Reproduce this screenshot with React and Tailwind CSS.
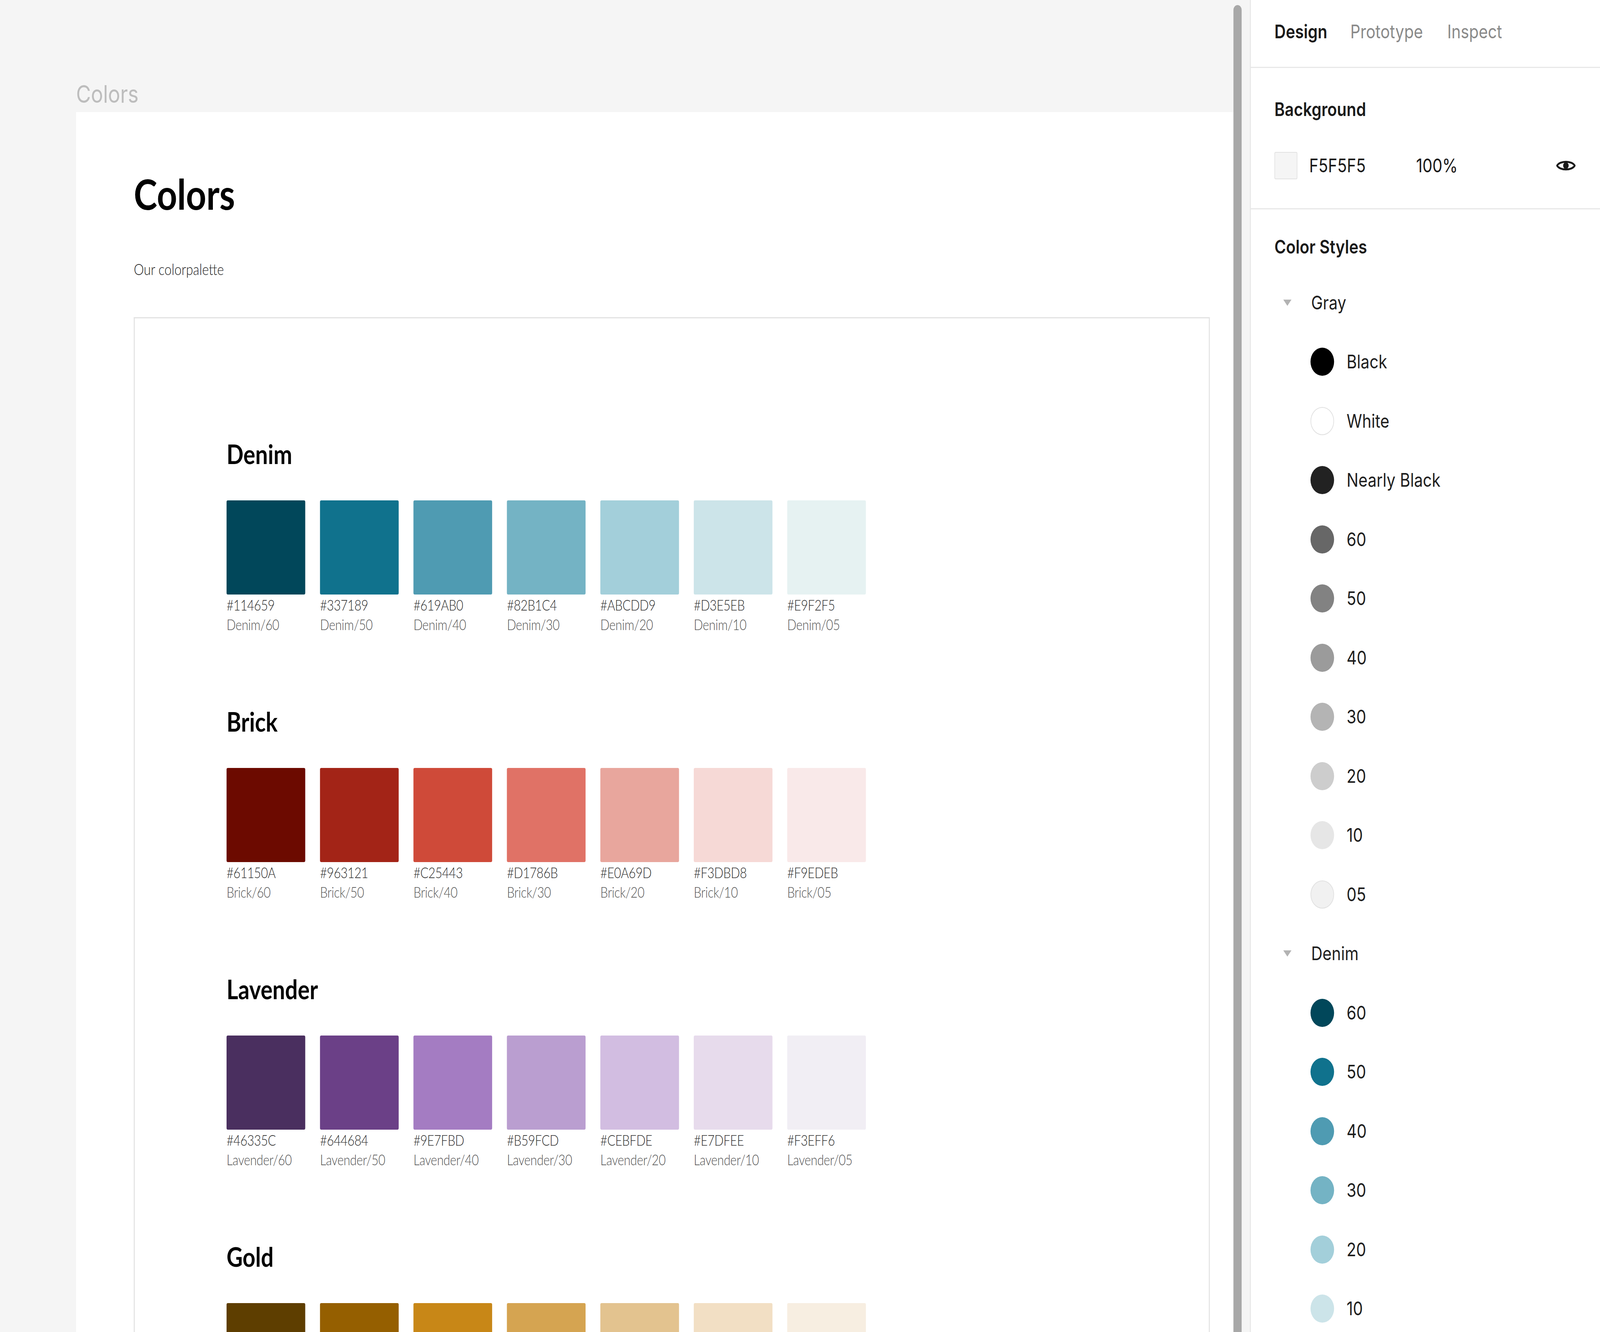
import { useEffect, useState } from "react";

const palettes = [
  {
    name: "Denim",
    swatches: [
      ["#114659", "60", "#01475a"],
      ["#337189", "50", "#10728d"],
      ["#619AB0", "40", "#4f9bb2"],
      ["#82B1C4", "30", "#74b3c4"],
      ["#ABCDD9", "20", "#a3cfda"],
      ["#D3E5EB", "10", "#cce4e9"],
      ["#E9F2F5", "05", "#e6f2f2"],
    ],
  },
  {
    name: "Brick",
    swatches: [
      ["#61150A", "60", "#6c0a00"],
      ["#963121", "50", "#a32417"],
      ["#C25443", "40", "#cf4a39"],
      ["#D1786B", "30", "#e07266"],
      ["#E0A69D", "20", "#e8a69d"],
      ["#F3DBD8", "10", "#f6d9d6"],
      ["#F9EDEB", "05", "#f9e9e9"],
    ],
  },
  {
    name: "Lavender",
    swatches: [
      ["#46335C", "60", "#4a2f5f"],
      ["#644684", "50", "#6b4087"],
      ["#9E7FBD", "40", "#a47cc2"],
      ["#B59FCD", "30", "#ba9ed0"],
      ["#CEBFDE", "20", "#d2bde1"],
      ["#E7DFEE", "10", "#e7dbec"],
      ["#F3EFF6", "05", "#f1eef4"],
    ],
  },
  {
    // only the top of this row is on screen, so no labels
    name: "Gold",
    cut: true,
    swatches: [
      ["#614000", "60", "#5e3e00"],
      ["#956000", "50", "#955f00"],
      ["#C88717", "40", "#c88717"],
      ["#D5A451", "30", "#d5a451"],
      ["#E3C38F", "20", "#e3c38f"],
      ["#F2DFC4", "10", "#f2dfc4"],
      ["#F7EEE1", "05", "#f7eee1"],
    ],
  },
];

const styleGroups = [
  {
    name: "Gray",
    items: [
      ["Black", "#000000", false],
      ["White", "#ffffff", true],
      ["Nearly Black", "#222222", false],
      ["60", "#676767", false],
      ["50", "#828282", false],
      ["40", "#9b9b9b", false],
      ["30", "#b4b4b4", false],
      ["20", "#cdcdcd", false],
      ["10", "#e6e6e6", false],
      ["05", "#f1f1f1", true],
    ],
  },
  {
    name: "Denim",
    items: [
      ["60", "#01475a", false],
      ["50", "#10728d", false],
      ["40", "#4f9bb2", false],
      ["30", "#74b3c4", false],
      ["20", "#a3cfda", false],
      ["10", "#cce4e9", false],
    ],
  },
];

const Palette = ({ name, swatches, cut }) => (
  <div className="shrink-0 flex flex-col mb-[196px]">
    <h2 className="text-[68px] leading-none font-bold text-black">{name}</h2>
    <div className="flex gap-[45px] mt-[85px]">
      {swatches.map(([hex, step, fill]) => (
        <div key={hex} className="flex flex-col w-[240px]">
          {/* fill comes from data */}
          <div className="shrink-0 h-[241px] rounded-[4px]" style={{ background: fill }} />
          {!cut && (
            <>
              <span className="mt-[8px] text-[37px] leading-none font-light text-[#2e2e2e] tracking-[-0.5px]">
                {hex}
              </span>
              <span className="mt-[13px] text-[37px] leading-none font-light text-[#555555] tracking-[-0.5px]">
                {name}/{step}
              </span>
            </>
          )}
        </div>
      ))}
    </div>
  </div>
);

const Eye = () => (
  <svg width="60" height="34" viewBox="0 0 60 34" fill="none">
    <path
      d="M3 17 C 12 4, 48 4, 57 17 C 48 30, 12 30, 3 17 Z"
      stroke="#1a1a1a"
      strokeWidth="5"
      strokeLinejoin="round"
    />
    <circle cx="30" cy="17" r="8.5" fill="#1a1a1a" />
  </svg>
);

const Caret = () => (
  <svg width="27" height="18" viewBox="0 0 27 18">
    <polygon points="1,1 26,1 13.5,17" fill="#b3b3b3" />
  </svg>
);

// the layout is drawn at 4880x3410; stretch it onto whatever the viewport really is
const useFit = () => {
  const get = () =>
    typeof window === "undefined"
      ? [1, 1]
      : [window.innerWidth / 4880, window.innerHeight / 3410];
  const [scale, setScale] = useState(get);
  useEffect(() => {
    const onResize = () => setScale(get());
    window.addEventListener("resize", onResize);
    return () => window.removeEventListener("resize", onResize);
  }, []);
  return scale;
};

const App = () => {
  const [sx, sy] = useFit();

  return (
    <div className="w-screen h-screen overflow-hidden bg-[#f5f5f5]">
      <div
        className="w-[4880px] h-[3410px] origin-top-left flex overflow-hidden bg-[#f5f5f5] font-['Inter',sans-serif]"
        style={{ transform: `scale(${sx}, ${sy})` }}
      >
        {/* Canvas */}
        <div className="w-[3762px] shrink-0 h-full flex flex-col pl-[232px] overflow-hidden">
          <div className="shrink-0 pt-[210px] text-[62px] leading-none text-[#bdbdbd]">Colors</div>
          <div className="mt-[15px] flex-1 min-h-0 bg-white flex flex-col pl-[176px] pr-[72px] pt-[154px] font-['Lato',sans-serif]">
            <h1 className="shrink-0 text-[108px] leading-none font-bold text-black">Colors</h1>
            <p className="shrink-0 mt-[121px] text-[39px] leading-none text-[#222222] font-light">
              Our colorpalette
            </p>
            <div className="mt-[103px] flex-1 min-h-0 overflow-hidden border-[3px] border-b-0 border-[#e2e2e2] pl-[280px] pt-[313px] flex flex-col">
              {palettes.map((p) => (
                <Palette key={p.name} {...p} />
              ))}
            </div>
          </div>
        </div>

        {/* Scrollbar */}
        <div className="w-[50px] shrink-0 h-full bg-[#f5f5f5] flex">
          <div className="w-[25px] mt-[13px] rounded-t-full bg-[#a8a8a8]" />
        </div>

        {/* Right panel */}
        <div className="w-[1068px] shrink-0 h-full bg-white border-l-[3px] border-[#e6e6e6] flex flex-col overflow-hidden">
          <div className="shrink-0 h-[174px] border-b-[3px] border-[#e8e8e8] flex items-center pl-[72px] pb-[9px] text-[48px] leading-none">
            <span className="font-semibold text-[#1a1a1a]">Design</span>
            <span className="ml-[70px] text-[#8a8a8a]">Prototype</span>
            <span className="ml-[74px] text-[#8a8a8a]">Inspect</span>
          </div>

          <div className="shrink-0 h-[362px] border-b-[3px] border-[#e8e8e8] pl-[72px] pr-[74px] pt-[82px] flex flex-col">
            <div className="text-[48px] leading-none font-semibold text-[#1a1a1a]">Background</div>
            <div className="mt-[85px] h-[70px] flex items-center text-[48px] leading-none text-[#1a1a1a]">
              <div className="w-[70px] h-[70px] rounded-[4px] bg-[#f5f5f5] border-[2px] border-[#e2e2e2]" />
              <span className="ml-[36px] w-[326px]">F5F5F5</span>
              <span>100%</span>
              <div className="ml-auto flex">
                <Eye />
              </div>
            </div>
          </div>

          <div className="flex-1 min-h-0 pl-[72px] pt-[72px] flex flex-col">
            <div className="shrink-0 text-[48px] leading-none font-semibold text-[#1a1a1a]">Color Styles</div>
            <div className="mt-[43px] flex flex-col">
              {styleGroups.map((g) => (
                <div key={g.name} className="shrink-0 flex flex-col">
                  <div className="shrink-0 h-[151.5px] flex items-center">
                    <div className="ml-[26px] w-[27px] flex">
                      <Caret />
                    </div>
                    <span className="ml-[59px] text-[48px] leading-none text-[#1f1f1f]">{g.name}</span>
                  </div>
                  {g.items.map(([label, color, outlined]) => (
                    <div key={g.name + label} className="shrink-0 h-[151.5px] flex items-center pl-[110px]">
                      <div
                        className={
                          outlined
                            ? "w-[72px] h-[72px] rounded-full border-[2px] border-[#e0e0e0]"
                            : "w-[72px] h-[72px] rounded-full"
                        }
                        style={{ background: color }}
                      />
                      <span className="ml-[38px] text-[48px] leading-none text-[#1f1f1f]">{label}</span>
                    </div>
                  ))}
                </div>
              ))}
            </div>
          </div>
        </div>
      </div>
    </div>
  );
};

export default App;
